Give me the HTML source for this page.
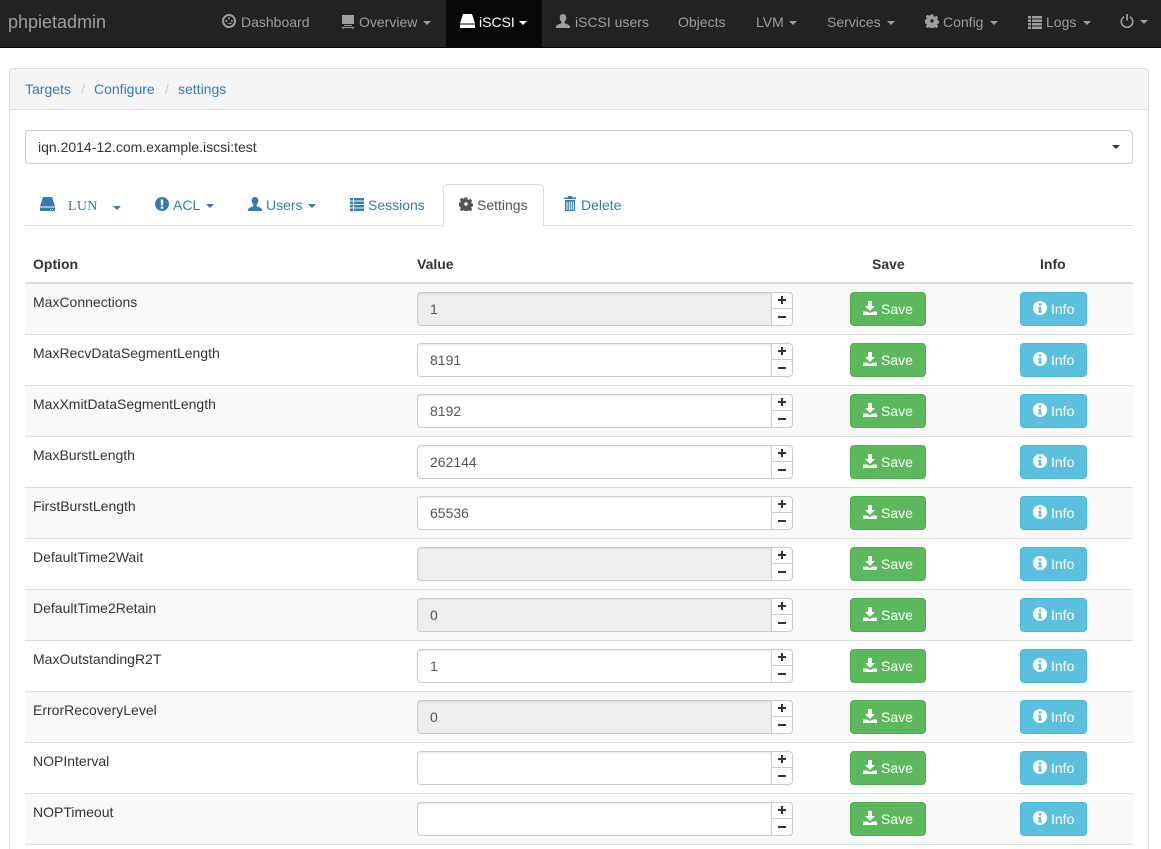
<!DOCTYPE html>
<html lang="en"><head><meta charset="utf-8"><title>phpietadmin</title>
<style>
*{box-sizing:border-box}
html,body{margin:0;padding:0;width:1161px;height:849px;overflow:hidden;background:#fff}
body{position:relative;font-family:"Liberation Sans",Arial,sans-serif;font-size:14px;line-height:20px;color:#333}
.t{position:absolute;white-space:nowrap;line-height:20px}
.nav{position:absolute;left:0;top:0;width:1161px;height:48px;background:#222;border-bottom:1px solid #080808;color:#9d9d9d}
.active{position:absolute;left:446px;top:0;width:96px;height:47px;background:#080808}
.c{position:absolute;width:0;height:0;border-top:4px solid #9d9d9d;border-left:4px solid transparent;border-right:4px solid transparent}
.ic{position:absolute;fill:currentColor}
a{color:#337ab7;text-decoration:none}
.panel{position:absolute;left:9px;top:68px;width:1140px;height:820px;border:1px solid #ddd;border-radius:4px}
.head{position:absolute;left:9px;top:68px;width:1140px;height:42px;background:#f5f5f5;border:1px solid #ddd;border-radius:4px 4px 0 0}
.sel{position:absolute;left:25px;top:130px;width:1108px;height:34px;border:1px solid #ccc;border-radius:4px;background:#fff}
.tabline{position:absolute;left:25px;top:225px;width:1108px;height:1px;background:#ddd}
.tab{position:absolute;left:443px;top:184px;width:101px;height:42px;background:#fff;border:1px solid #ddd;border-bottom:0;border-radius:4px 4px 0 0}
.th{position:absolute;font-weight:bold;top:254px;white-space:nowrap}
.hl{position:absolute;left:25px;top:282px;width:1108px;height:2px;background:#ddd}
.r{position:absolute;left:25px;width:1108px;height:51px;border-bottom:1px solid #ddd;background:#fff}
.s{background:#f9f9f9}
.l{position:absolute;left:8px;top:8px;white-space:nowrap}
.i{position:absolute;left:392px;top:8px;width:355px;height:34px;background:#fff;border:1px solid #ccc;border-radius:4px 0 0 4px;padding:6px 12px;color:#555;box-shadow:inset 0 1px 1px rgba(0,0,0,.075)}
.d{background:#eee}
.sp{position:absolute;left:746px;top:8px;width:22px;height:34px;background:#fff;border:1px solid #ccc;border-radius:0 4px 4px 0}
.sp:before{content:"";position:absolute;left:0;right:0;top:15px;height:1px;background:#ccc}
.p1,.p2{position:absolute;background:#333}
.p1{left:6px;top:6px;width:8px;height:2px}
.p2{left:9px;top:3px;width:2px;height:8px}
.m{position:absolute;left:6px;top:23px;width:8px;height:2px;background:#333}
.b{position:absolute;top:8px;height:34px;border-radius:4px;color:#fff}
.sv{left:825px;width:76px;background:#5cb85c;border:1px solid #4cae4c}
.nf{left:995px;width:67px;background:#5bc0de;border:1px solid #46b8da}
.b span{position:absolute;top:6px;white-space:nowrap}
.sv span{left:30px}.nf span{left:30px}
.sv svg{position:absolute;left:12px;top:8px;width:14px;height:14px;fill:#fff}
.nf svg{position:absolute;left:12px;top:8px;width:14px;height:14px;fill:#fff}
</style></head><body>
<svg width="0" height="0" style="position:absolute">
<symbol id="hdd" viewBox="0 0 15 14"><path d="M3 0h9l3 9.500H0z"/><path d="M0 10.500h15V14H0z"/><path d="M10 12h1v1h-1zM12 12h1v1h-1z" fill="#fff"/></symbol>
<symbol id="user" viewBox="0 0 14 14"><path d="M7 0c2.200 0 3.300 1.700 3.300 3.800 0 1.700-.8 3.200-1.700 4v1.400c1.700.6 4.900 1.500 5.400 3.200V14H0v-1.600c.5-1.700 3.700-2.600 5.400-3.200V7.800c-.9-.8-1.700-2.300-1.700-4C3.700 1.700 4.800 0 7 0z"/></symbol>
<symbol id="list" viewBox="0 0 14 14"><path d="M0 1h3v2.500H0zM4 1h10v2.500H4zM0 4.500h3V7H0zM4 4.500h10V7H4zM0 8h3v2.500H0zM4 8h10v2.500H4zM0 11.500h3V14H0zM4 11.500h10V14H4z"/></symbol>
<symbol id="gear" viewBox="0 0 14 14"><path fill-rule="evenodd" d="M5.700 0h2.600l.4 2 1.300.6 1.800-1.100 1.800 1.800-1.100 1.800.6 1.300 2 .4v2.600l-2 .4-.6 1.300 1.100 1.800-1.800 1.800-1.800-1.100-1.300.6-.4 2H5.700l-.4-2-1.300-.6-1.800 1.100-1.800-1.800 1.100-1.800-.6-1.300-2-.4V5.700l2-.4.600-1.300L.4 2.200 2.200.4 4 1.500l1.300-.6zM7 5.200a1.800 1.800 0 1 0 0 3.600 1.800 1.800 0 0 0 0-3.600z" transform="translate(.4 .4) scale(.94)"/></symbol>
<symbol id="info" viewBox="0 0 14 14"><path fill-rule="evenodd" d="M7 0a7 7 0 1 1 0 14A7 7 0 0 1 7 0zM5.800 2.500v2.200h2.400V2.500zM5 6v1.300h.8v3H5v1.200h4v-1.200h-.8V6z"/></symbol>
<symbol id="excl" viewBox="0 0 14 14"><path fill-rule="evenodd" d="M7 0a7 7 0 1 1 0 14A7 7 0 0 1 7 0zM5.700 2.500l.3 6h2l.3-6zM5.800 9.500v2.200h2.400V9.500z"/></symbol>
<symbol id="dl" viewBox="0 0 14 14"><path d="M5 0h4v5h3L7 10 2 5h3z"/><path d="M0 10.500h4L7 12l3-1.500h4V14H0z"/></symbol>
<symbol id="trash" viewBox="0 0 14 15"><path fill-rule="evenodd" d="M5 0h4l.5 1.500H13V3H1V1.500h3.500zM2 4h10v11H2zM3.500 5.500V14h1V5.500zM5.800 5.500V14h1V5.500zM7.800 5.500V14h1V5.500zM9.800 5.500V14h1V5.500z"/></symbol>
<symbol id="mon" viewBox="0 0 14 14"><path d="M1 0h12v9H1z"/><path d="M3 10h8v1H3zM1 12h12v1.500h-2V13H3v.5H1z"/></symbol>
</svg>

<div class="nav"></div>
<div class="active"></div>
<div class="t" style="left:8px;top:12px;font-size:18px;color:#9d9d9d">phpietadmin</div>

<svg class="ic" style="left:222px;top:14px;color:#9d9d9d" width="14" height="14" viewBox="0 0 14 14"><circle cx="7" cy="7" r="6" fill="none" stroke="currentColor" stroke-width="2"/><path d="M3.500 6h1.700v1.700H3.500zM6.200 3.500h1.700v1.700H6.200zM9 6h1.700v1.700H9zM4.500 9.800L9 8.500l1 1.500z"/></svg>
<div class="t" style="left:241px;top:12px;color:#9d9d9d">Dashboard</div>
<svg class="ic" style="left:341px;top:15px;color:#9d9d9d" width="14" height="14"><use href="#mon"/></svg>
<div class="t" style="left:359px;top:12px;color:#9d9d9d">Overview</div><div class="c" style="left:423px;top:21px"></div>
<svg class="ic" style="left:460px;top:14px;color:#fff" width="15" height="14"><use href="#hdd"/></svg>
<div class="t" style="left:479px;top:12px;color:#fff">iSCSI</div><div class="c" style="left:519px;top:21px;border-top-color:#fff"></div>
<svg class="ic" style="left:556px;top:14px;color:#9d9d9d" width="14" height="14"><use href="#user"/></svg>
<div class="t" style="left:575px;top:12px;color:#9d9d9d">iSCSI users</div>
<div class="t" style="left:678px;top:12px;color:#9d9d9d">Objects</div>
<div class="t" style="left:756px;top:12px;color:#9d9d9d">LVM</div><div class="c" style="left:789px;top:21px"></div>
<div class="t" style="left:827px;top:12px;color:#9d9d9d">Services</div><div class="c" style="left:887px;top:21px"></div>
<svg class="ic" style="left:925px;top:14px;color:#9d9d9d" width="14" height="14"><use href="#gear"/></svg>
<div class="t" style="left:943px;top:12px;color:#9d9d9d">Config</div><div class="c" style="left:990px;top:21px"></div>
<svg class="ic" style="left:1028px;top:15px;color:#9d9d9d" width="14" height="14"><use href="#list"/></svg>
<div class="t" style="left:1046px;top:12px;color:#9d9d9d">Logs</div><div class="c" style="left:1083px;top:21px"></div>
<svg class="ic" style="left:1120px;top:14px;color:#9d9d9d" width="14" height="14" viewBox="0 0 14 14"><path d="M4 2.800a5.700 5.700 0 1 0 6 0" fill="none" stroke="currentColor" stroke-width="1.700"/><path d="M6.100 0h1.800v6.500H6.100z"/></svg>
<div class="c" style="left:1140px;top:20px"></div>

<div class="panel"></div>
<div class="head"></div>
<div class="t" style="left:25px;top:79px"><a>Targets</a></div>
<div class="t" style="left:81px;top:79px;color:#ccc">/</div>
<div class="t" style="left:94px;top:79px"><a>Configure</a></div>
<div class="t" style="left:165px;top:79px;color:#ccc">/</div>
<div class="t" style="left:178px;top:79px"><a>settings</a></div>

<div class="sel"></div>
<div class="t" style="left:38px;top:137px;color:#333">iqn.2014-12.com.example.iscsi:test</div>
<div class="c" style="left:1112px;top:145px;border-top-color:#333"></div>

<div class="tabline"></div>
<div class="tab"></div>
<svg class="ic" style="left:40px;top:197px;color:#337ab7" width="15" height="14"><use href="#hdd"/></svg>
<div class="t" style="left:68px;top:197px;color:#337ab7;font-family:'Liberation Serif',serif;letter-spacing:.3px">LUN</div>
<div class="c" style="left:113px;top:206px;border-top-color:#337ab7"></div>
<svg class="ic" style="left:155px;top:197px;color:#337ab7" width="14" height="14"><use href="#excl"/></svg>
<div class="t" style="left:173px;top:195px;color:#337ab7">ACL</div>
<div class="c" style="left:206px;top:204px;border-top-color:#337ab7"></div>
<svg class="ic" style="left:248px;top:197px;color:#337ab7" width="14" height="14"><use href="#user"/></svg>
<div class="t" style="left:266px;top:195px;color:#337ab7">Users</div>
<div class="c" style="left:308px;top:204px;border-top-color:#337ab7"></div>
<svg class="ic" style="left:350px;top:197px;color:#337ab7" width="14" height="14"><use href="#list"/></svg>
<div class="t" style="left:368px;top:195px;color:#337ab7">Sessions</div>
<svg class="ic" style="left:459px;top:197px;color:#555" width="14" height="14"><use href="#gear"/></svg>
<div class="t" style="left:477px;top:195px;color:#555">Settings</div>
<svg class="ic" style="left:563px;top:196px;color:#337ab7" width="14" height="15"><use href="#trash"/></svg>
<div class="t" style="left:581px;top:195px;color:#337ab7">Delete</div>

<div class="th" style="left:33px">Option</div>
<div class="th" style="left:417px">Value</div>
<div class="th" style="left:872px">Save</div>
<div class="th" style="left:1040px">Info</div>
<div class="hl"></div>

<div class="r s" style="top:284px"><div class="l">MaxConnections</div><div class="i d">1</div><div class="sp"><i class="p1"></i><i class="p2"></i><i class="m"></i></div><div class="b sv"><svg><use href="#dl"/></svg><span>Save</span></div><div class="b nf"><svg><use href="#info"/></svg><span>Info</span></div></div>
<div class="r" style="top:335px"><div class="l">MaxRecvDataSegmentLength</div><div class="i">8191</div><div class="sp"><i class="p1"></i><i class="p2"></i><i class="m"></i></div><div class="b sv"><svg><use href="#dl"/></svg><span>Save</span></div><div class="b nf"><svg><use href="#info"/></svg><span>Info</span></div></div>
<div class="r s" style="top:386px"><div class="l">MaxXmitDataSegmentLength</div><div class="i">8192</div><div class="sp"><i class="p1"></i><i class="p2"></i><i class="m"></i></div><div class="b sv"><svg><use href="#dl"/></svg><span>Save</span></div><div class="b nf"><svg><use href="#info"/></svg><span>Info</span></div></div>
<div class="r" style="top:437px"><div class="l">MaxBurstLength</div><div class="i">262144</div><div class="sp"><i class="p1"></i><i class="p2"></i><i class="m"></i></div><div class="b sv"><svg><use href="#dl"/></svg><span>Save</span></div><div class="b nf"><svg><use href="#info"/></svg><span>Info</span></div></div>
<div class="r s" style="top:488px"><div class="l">FirstBurstLength</div><div class="i">65536</div><div class="sp"><i class="p1"></i><i class="p2"></i><i class="m"></i></div><div class="b sv"><svg><use href="#dl"/></svg><span>Save</span></div><div class="b nf"><svg><use href="#info"/></svg><span>Info</span></div></div>
<div class="r" style="top:539px"><div class="l">DefaultTime2Wait</div><div class="i d"></div><div class="sp"><i class="p1"></i><i class="p2"></i><i class="m"></i></div><div class="b sv"><svg><use href="#dl"/></svg><span>Save</span></div><div class="b nf"><svg><use href="#info"/></svg><span>Info</span></div></div>
<div class="r s" style="top:590px"><div class="l">DefaultTime2Retain</div><div class="i d">0</div><div class="sp"><i class="p1"></i><i class="p2"></i><i class="m"></i></div><div class="b sv"><svg><use href="#dl"/></svg><span>Save</span></div><div class="b nf"><svg><use href="#info"/></svg><span>Info</span></div></div>
<div class="r" style="top:641px"><div class="l">MaxOutstandingR2T</div><div class="i">1</div><div class="sp"><i class="p1"></i><i class="p2"></i><i class="m"></i></div><div class="b sv"><svg><use href="#dl"/></svg><span>Save</span></div><div class="b nf"><svg><use href="#info"/></svg><span>Info</span></div></div>
<div class="r s" style="top:692px"><div class="l">ErrorRecoveryLevel</div><div class="i d">0</div><div class="sp"><i class="p1"></i><i class="p2"></i><i class="m"></i></div><div class="b sv"><svg><use href="#dl"/></svg><span>Save</span></div><div class="b nf"><svg><use href="#info"/></svg><span>Info</span></div></div>
<div class="r" style="top:743px"><div class="l">NOPInterval</div><div class="i"></div><div class="sp"><i class="p1"></i><i class="p2"></i><i class="m"></i></div><div class="b sv"><svg><use href="#dl"/></svg><span>Save</span></div><div class="b nf"><svg><use href="#info"/></svg><span>Info</span></div></div>
<div class="r s" style="top:794px"><div class="l">NOPTimeout</div><div class="i"></div><div class="sp"><i class="p1"></i><i class="p2"></i><i class="m"></i></div><div class="b sv"><svg><use href="#dl"/></svg><span>Save</span></div><div class="b nf"><svg><use href="#info"/></svg><span>Info</span></div></div>
</body></html>
